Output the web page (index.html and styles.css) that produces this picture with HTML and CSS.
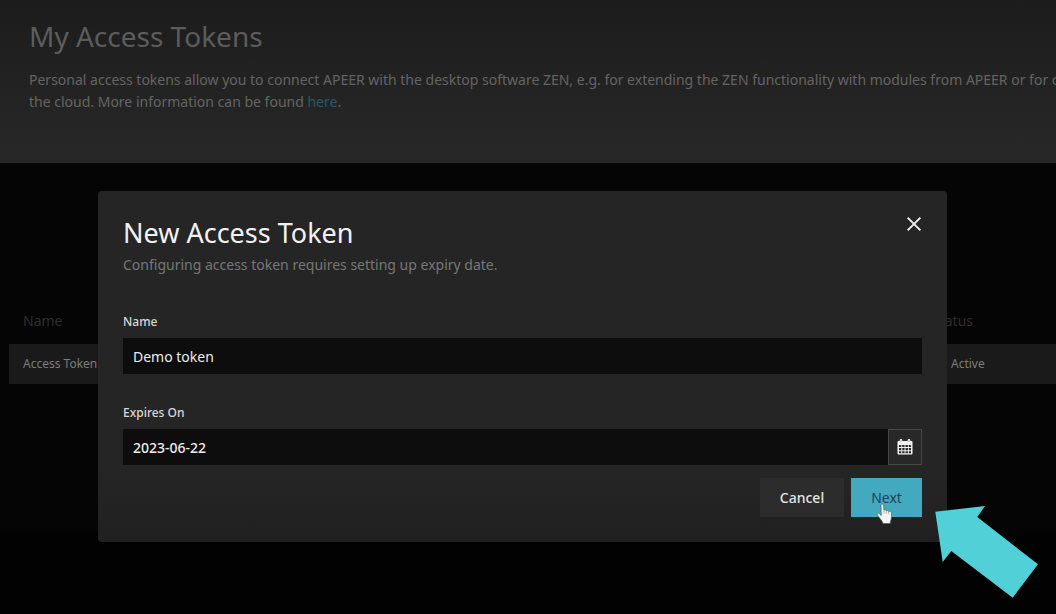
FILE: index.html
```
<!DOCTYPE html>
<html lang="en">
<head>
<meta charset="utf-8">
<meta name="viewport" content="width=device-width, initial-scale=1">
<title>My Access Tokens</title>
<link rel="stylesheet" href="styles.css">
</head>
<body>
<header class="page-header">
  <h1 class="page-title">My Access Tokens</h1>
  <p class="page-intro">Personal access tokens allow you to connect APEER with the desktop software ZEN, e.g. for extending the ZEN functionality with modules from APEER or for c<br>the cloud. More information can be found <a class="link" href="#">here</a>.</p>
</header>

<main class="content">
  <table class="tokens">
    <thead>
      <tr><th>Name</th><th class="col-status">Status</th></tr>
    </thead>
    <tbody>
      <tr><td>Access Token</td><td class="col-status cell-status">Active</td></tr>
    </tbody>
  </table>
</main>

<div class="overlay">
  <section class="modal" role="dialog" aria-modal="true" aria-labelledby="modal-title">
    <div class="modal-head">
      <h2 class="modal-title" id="modal-title">New Access Token</h2>
      <button class="close" type="button" aria-label="Close">
        <svg width="16" height="16" viewBox="0 0 16 16" aria-hidden="true"><path d="M1.6 1.6 14.4 14.4M14.4 1.6 1.6 14.4" fill="none" stroke="currentColor" stroke-width="2"/></svg>
      </button>
    </div>
    <p class="modal-sub">Configuring access token requires setting up expiry date.</p>
    <form class="form">
      <div class="field">
        <label class="label" for="token-name">Name</label>
        <input class="input" id="token-name" type="text" value="Demo token">
      </div>
      <div class="field">
        <label class="label" for="token-expiry">Expires On</label>
        <div class="date">
          <input class="input" id="token-expiry" type="text" value="2023-06-22">
          <button class="date-button" type="button" aria-label="Choose date">
            <svg width="16" height="16" viewBox="0 0 16 16" aria-hidden="true">
              <path fill="#f2f2f2" fill-rule="evenodd" d="M1.500 2H2.600V1.500A1.400 1.400 0 0 1 5.400 1.500V2H10.600V1.500A1.400 1.400 0 0 1 13.400 1.500V2H14.500Q15.500 2 15.500 3V14.500Q15.500 15.500 14.500 15.500H1.500Q.5 15.500.5 14.500V3Q.5 2 1.500 2ZM2 6V8H4.300V6ZM5.200 6V8H7.600V6ZM8.500 6V8H10.900V6ZM11.800 6V8H14V6ZM2 9V11.200H4.300V9ZM5.200 9V11.200H7.600V9ZM8.500 9V11.200H10.900V9ZM11.800 9V11.200H14V9ZM2 12.200V14.200H4.300V12.200ZM5.200 12.200V14.200H7.600V12.200ZM8.500 12.200V14.200H10.900V12.200ZM11.800 12.200V14.200H14V12.200Z"/>
              <path d="M4 1.200V3.200M12 1.200V3.200" stroke="#888" stroke-width=".7"/>
            </svg>
          </button>
        </div>
      </div>
      <div class="actions">
        <button class="btn btn-cancel" type="button">Cancel</button>
        <div class="next-wrap">
          <button class="btn btn-next" type="button">Next</button>
          <svg class="cursor" width="18" height="22" viewBox="0 0 18 22" aria-hidden="true"><path fill="#f4f4f4" stroke="#4a4a4a" stroke-width=".6" stroke-linejoin="round" d="M5 2.200C5 .7 7.500.7 7.600 2.200L7.900 7.200C8.600 6.500 10 6.700 10.200 7.800C11 7.100 12.500 7.500 12.700 8.600C13.600 8 15.500 8.500 15.500 10.200V14.500C15.500 16.500 14.300 17.500 14.300 20.500H7C6.500 18 4 16 2.700 13.800L1.200 11.800C.5 10.500 2 9.700 3.200 10.600L5.300 12.500Z"/><path d="M8 7.500V10.500M10.300 8V10.800M12.700 8.800V11" stroke="#8a8a8a" stroke-width=".6"/></svg>
        </div>
      </div>
    </form>
    <svg class="pointer-arrow" width="104" height="93" viewBox="0 0 104 93" aria-hidden="true"><polygon fill="#52d0d8" points="0.300,6.700 50,1 42.300,12 103,59.300 77.700,92.700 16.300,46 7.700,57"/></svg>
  </section>
</div>
</body>
</html>
```
FILE: styles.css
```
* { box-sizing: border-box; }

body {
  margin: 0;
  min-height: 100vh;
  background: linear-gradient(#050505 0, #050505 530px, #020202 534px);
  color: #666;
  font-family: "Noto Sans", "Open Sans", sans-serif;
  font-size: 14px;
  overflow: hidden;
}

h1, h2, p { margin: 0; font-weight: 400; }
button, input { font: inherit; }

.page-header {
  padding: 17px 0 50px 29px;
  background: linear-gradient(#1c1c1c, #282828);
  overflow: hidden;
}
.page-title { color: #5c5c5c; font-size: 28px; line-height: 38px; }
.page-intro {
  margin-top: 14px;
  color: #646464;
  line-height: 22px;
  white-space: nowrap;
}
.link { color: #235c6e; text-decoration: none; }

.content { padding: 135px 0 0 9px; }
.tokens { width: 100%; border-collapse: collapse; text-align: left; }
.tokens th { height: 46px; padding: 0 14px 2px; color: #2e2e2e; font-weight: 400; vertical-align: middle; }
.tokens td { height: 40px; padding: 0 14px 2px; background: #1a1a1a; color: #7c7c7c; font-size: 12px; }
.tokens .col-status { width: 138px; }
.tokens .cell-status { padding-left: 33px; }

.overlay {
  position: fixed;
  inset: 0;
  padding: 191px 109px 0 98px;
}
.modal {
  position: relative;
  padding: 23px 25px 25px;
  border-radius: 4px;
  background: linear-gradient(#252525 80%, #202020);
}
.modal-head { display: flex; justify-content: space-between; align-items: flex-start; }
.modal-title { color: #f2f2f2; font-size: 27px; line-height: 38px; }
.close {
  display: flex;
  padding: 2px 0;
  border: 0;
  background: none;
  color: #eee;
}
.modal-sub { margin-top: 1px; color: #777; line-height: 24px; }

.form { margin-top: 35px; }
.field { display: flex; flex-direction: column; gap: 6px; margin-bottom: 29px; }
.label { color: #d8d8d8; font-size: 12px; font-weight: 500; line-height: 20px; }
.input {
  flex: 1;
  min-width: 0;
  height: 36px;
  min-height: 36px;
  padding: 0 10px;
  border: 0;
  border-radius: 0;
  background: #0d0d0d;
  color: #ececec;
}
.date { display: flex; }
.date .input { font-weight: 500; }
.date-button {
  display: grid;
  place-items: center;
  width: 34px;
  height: 36px;
  padding: 0;
  border: 1px solid #474747;
  background: #282828;
}
.actions { display: flex; justify-content: flex-end; gap: 7px; margin-top: -16px; }
.btn { height: 39px; padding: 0; border: 0; font-weight: 500; }
.btn-cancel { width: 84px; background: #2c2c2c; color: #e4e4e4; }
.btn-next { width: 71px; background: #42a9bf; color: #174754; font-weight: 400; }
.next-wrap { position: relative; }
.cursor { position: absolute; left: 25px; top: 25px; }
.pointer-arrow { position: absolute; left: calc(100% - 12px); top: 314px; }
```
